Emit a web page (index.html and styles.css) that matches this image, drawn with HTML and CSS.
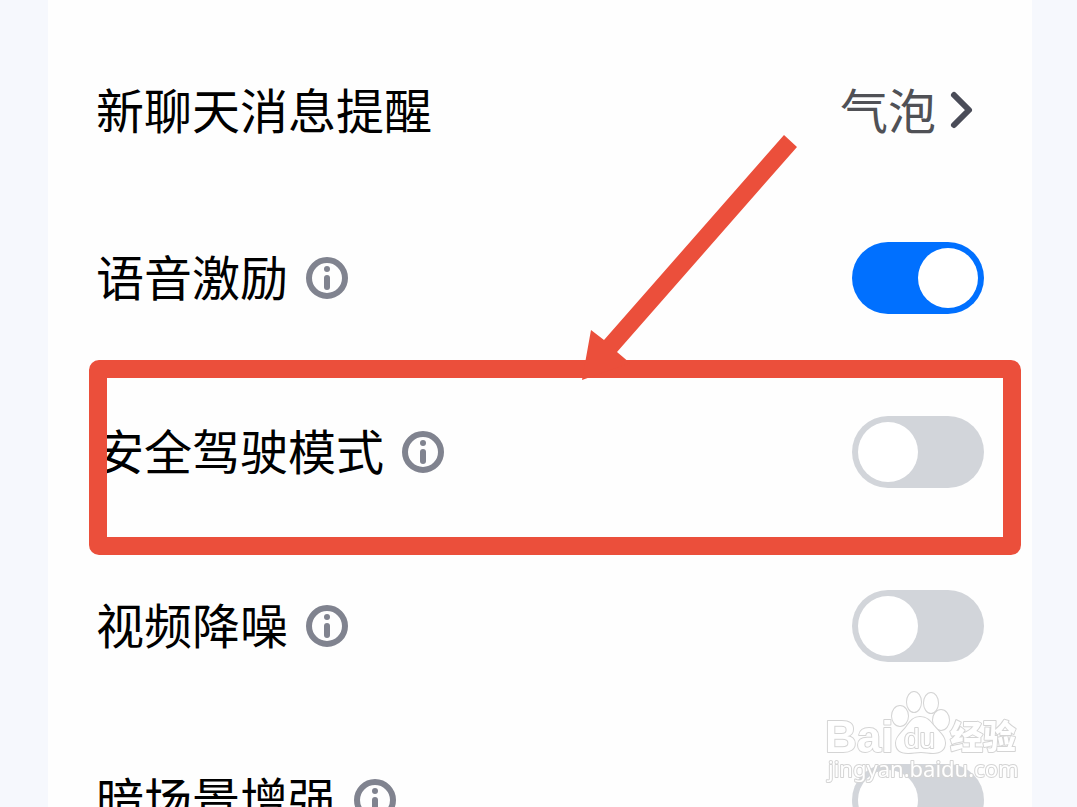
FILE: index.html
```html
<!DOCTYPE html>
<html lang="zh-CN">
<head>
    <meta charset="UTF-8">
    <meta name="viewport" content="width=device-width, initial-scale=1.0">
    <title>会议设置</title>
    <link rel="stylesheet" href="styles.css">
</head>
<body>

    <svg class="symbols" aria-hidden="true">
        <symbol id="info" viewBox="0 0 42 42">
            <circle cx="21" cy="21" r="18" fill="none" stroke="currentColor" stroke-width="6"/>
            <circle cx="21" cy="12" r="3" fill="currentColor"/>
            <path d="M21 21v9" stroke="currentColor" stroke-width="6" stroke-linecap="round"/>
        </symbol>
    </svg>

    <main class="settings">
        <div class="row row-link">
            <span class="name">新聊天消息提醒</span>
            <button type="button" class="value"><span class="name">气泡</span>
                <svg class="chevron" viewBox="0 0 48 48" aria-hidden="true"><path d="M18 8l15 15l-15 15"/></svg>
            </button>
        </div>

        <div class="row">
            <label class="name" for="voice">语音激励</label>
            <button type="button" class="info" aria-label="语音激励说明"><svg><use href="#info"/></svg></button>
            <input type="checkbox" class="switch" id="voice" checked>
        </div>

        <div class="row">
            <label class="name" for="driving">安全驾驶模式</label>
            <button type="button" class="info" aria-label="安全驾驶模式说明"><svg><use href="#info"/></svg></button>
            <input type="checkbox" class="switch" id="driving">
            <div class="highlight"></div>
            <svg class="arrow" viewBox="0 0 220 252" aria-hidden="true">
                <path d="M204 5L217 17L37 222L50 233L2 250L11 200L24 210Z"/>
            </svg>
        </div>

        <div class="row">
            <label class="name" for="noise">视频降噪</label>
            <button type="button" class="info" aria-label="视频降噪说明"><svg><use href="#info"/></svg></button>
            <input type="checkbox" class="switch" id="noise">
        </div>

        <div class="row">
            <label class="name" for="dark">暗场景增强</label>
            <button type="button" class="info" aria-label="暗场景增强说明"><svg><use href="#info"/></svg></button>
            <input type="checkbox" class="switch" id="dark">
        </div>
    </main>

    <svg class="watermark" viewBox="0 0 204 104">
        <text class="logo" x="5" y="66">Bai</text>
        <g class="paw">
            <ellipse cx="80" cy="30" rx="8" ry="10"/>
            <ellipse cx="94" cy="16" rx="7" ry="10"/>
            <ellipse cx="111" cy="17" rx="7" ry="10"/>
            <ellipse cx="121" cy="34" rx="8" ry="10"/>
            <path d="M100 31c-7 0-10 5-13 9c-4 6-11 10-11 17c0 7 5 10 12 10c5 0 8-1 13-1s7 1 12 1c8 0 12-4 12-10c0-7-6-11-11-17c-4-5-7-9-14-9z"/>
        </g>
        <text class="du" x="84" y="62">du</text>
        <text class="jingyan" x="130" y="63">经验</text>
        <text class="site" x="8" y="91">jingyan.baidu.com</text>
    </svg>

</body>
</html>
```
FILE: styles.css
```css
body {
margin: 0;
height: 100vh;
overflow: hidden;
background-color: #f6f8fd;
font-family: "Noto Sans CJK SC", sans-serif;
font-size: 48px;
line-height: 72px;
color: #000;
}

.symbols {
display: none;
}

.settings {
margin: 0 45px 0 48px;
padding: 31px 48px 0;
min-height: 100vh;
box-sizing: border-box;
background-color: #fefefe;
}

.row {
position: relative;
display: flex;
align-items: center;
gap: 18px;
height: 174px;
}

.row-link {
height: 160px;
}

.name {
padding-bottom: 6px;
}

button {
padding: 0;
border: none;
background: none;
font: inherit;
cursor: pointer;
}

.value {
display: flex;
align-items: center;
margin-left: auto;
color: #505156;
}

.chevron {
width: 48px;
height: 48px;
fill: none;
stroke: #4a4c58;
stroke-width: 6;
stroke-linecap: round;
stroke-linejoin: round;
}

.info {
width: 42px;
height: 42px;
color: #80838f;
}

.info svg {
display: block;
width: 42px;
height: 42px;
}

/* toggle switch */
.switch {
appearance: none;
display: flex;
box-sizing: border-box;
width: 132px;
height: 72px;
margin: 0 0 0 auto;
padding: 6px;
border-radius: 36px;
background-color: #d2d5da;
cursor: pointer;
}

.switch::before {
content: "";
width: 60px;
height: 60px;
border-radius: 50%;
background-color: #fff;
}

.switch:checked {
justify-content: flex-end;
background-color: #0070ff;
}

/* red marker over the driving mode row */
.highlight {
position: absolute;
top: -5px;
right: -37px;
bottom: -16px;
left: -7px;
border: 18px solid #eb4f3b;
border-radius: 10px;
pointer-events: none;
}

.arrow {
position: absolute;
top: -235px;
right: 184px;
width: 220px;
height: 252px;
fill: #eb4f3b;
pointer-events: none;
}

.watermark {
position: fixed;
right: 53px;
bottom: 17px;
width: 204px;
height: 104px;
fill: #fff;
stroke: #d4d4d4;
stroke-width: 2;
stroke-linejoin: round;
paint-order: stroke;
pointer-events: none;
}

.logo {
font: bold 44px "Liberation Sans", sans-serif;
}

.du {
font: 28px "Liberation Sans", sans-serif;
}

.jingyan {
font: 900 33px "Noto Sans CJK SC", sans-serif;
}

.site {
font: 22px "Noto Sans", sans-serif;
}
```
